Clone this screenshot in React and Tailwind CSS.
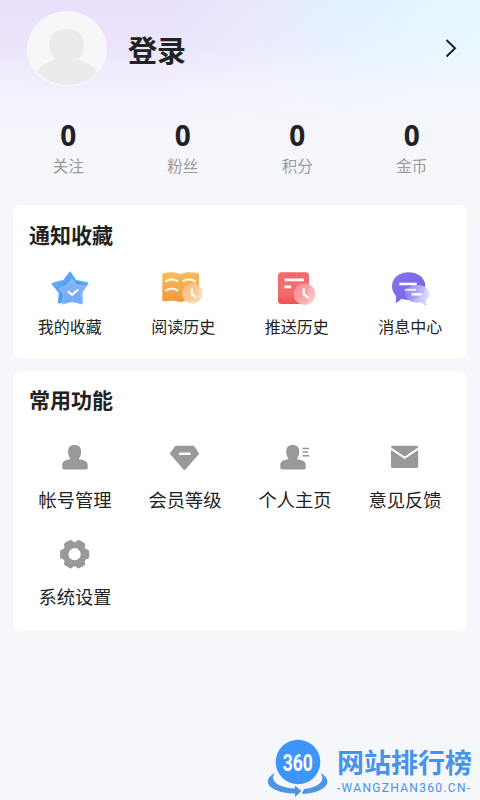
import React from 'react';

const stats = [
  { label: '关注', value: 0 },
  { label: '粉丝', value: 0 },
  { label: '积分', value: 0 },
  { label: '金币', value: 0 }
];

const StarIcon = () => <svg viewBox="0 0 40 40" className="w-10 h-10">
    <defs>
      <linearGradient id="starBack" x1="0" y1="0" x2="1" y2="1">
        <stop offset="0" stopColor="#74b8fb" />
        <stop offset="0.5" stopColor="#4a9bf3" />
        <stop offset="1" stopColor="#8fc3fb" />
      </linearGradient>
      <linearGradient id="starFront" x1="0" y1="0" x2="0" y2="1">
        <stop offset="0" stopColor="#8cbcf8" />
        <stop offset="1" stopColor="#74a4f4" />
      </linearGradient>
    </defs>
    <path d="M20 3.5L25.5 12L37.5 14.3L31.5 23L32 34L20 31.5L9 33.5L9.8 23.5L2.5 14.8L14 11.8Z" fill="url(#starBack)" stroke="url(#starBack)" strokeWidth="2" strokeLinejoin="round" />
    <path d="M22 10L27 16L36 17.8L31.4 25L32 35L22.2 32.8L12.7 35.2L13.7 26L9.2 19.8L17 16.2Z" fill="url(#starFront)" fillOpacity="0.92" stroke="#9cc5fb" strokeWidth="0.8" strokeLinejoin="round" />
    <path d="M18.6 22.8L22 25.8L27.6 21" fill="none" stroke="#fff" strokeWidth="2.2" strokeLinecap="round" strokeLinejoin="round" />
  </svg>;

const BookIcon = () => <svg viewBox="0 0 40 40" className="w-10 h-10 overflow-visible">
    <defs>
      <linearGradient id="book" x1="0" y1="0" x2="0" y2="1">
        <stop offset="0" stopColor="#f5bd5f" />
        <stop offset="1" stopColor="#f0983b" />
      </linearGradient>
      <linearGradient id="bookClock" x1="0" y1="0" x2="1" y2="1">
        <stop offset="0" stopColor="#f6b878" />
        <stop offset="1" stopColor="#fde3cb" />
      </linearGradient>
    </defs>
    <g transform="translate(-1 0)">
      <path d="M2 4C8 3 14 3 18.5 5.2C23 3 30 3 35.5 4Q37 4.2 37 6V31Q37 32.5 35.5 32.2C30 31.4 23 31.5 18.5 33C14 31.5 7 31.4 2 32.2Q.3 32.5 .3 31V6Q.3 4.2 2 4Z" fill="url(#book)" />
      <path d="M4 12.3Q9.5 8.6 15.3 12M21.4 12Q27.5 8.6 33 12.3M4 21.4Q9.5 17.8 15.3 21.2" fill="none" stroke="#fff6df" strokeWidth="2.3" strokeLinecap="round" />
      <circle cx="30.3" cy="24.5" r="10.3" fill="url(#bookClock)" fillOpacity="0.9" />
      <path d="M29.8 20V25L33.5 28.2" fill="none" stroke="#fffaf2" strokeWidth="2" strokeLinecap="round" />
    </g>
  </svg>;

const PushIcon = () => <svg viewBox="0 0 40 40" className="w-10 h-10">
    <defs>
      <linearGradient id="push" x1="0" y1="0" x2="0" y2="1">
        <stop offset="0" stopColor="#f0696b" />
        <stop offset="0.6" stopColor="#f16f70" />
        <stop offset="1" stopColor="#ee5355" />
      </linearGradient>
      <linearGradient id="pushClock" x1="0" y1="0" x2="1" y2="1">
        <stop offset="0" stopColor="#f38687" />
        <stop offset="1" stopColor="#fcd0d0" />
      </linearGradient>
    </defs>
    <rect x="1" y="3.3" width="31" height="31.7" rx="3.5" fill="url(#push)" />
    <path d="M7.5 10.9H26.8M7.5 17.8H14.2" stroke="#fff" strokeWidth="2.8" />
    <circle cx="27.5" cy="25.2" r="10.8" fill="url(#pushClock)" fillOpacity="0.94" />
    <path d="M26.7 20.2V25.2L30.9 28.4" fill="none" stroke="#fff" strokeWidth="2.2" strokeLinecap="round" />
  </svg>;

const MessageIcon = () => <svg viewBox="0 0 40 40" className="w-10 h-10">
    <defs>
      <linearGradient id="msg" x1="0" y1="0" x2="1" y2="1">
        <stop offset="0" stopColor="#8674ec" />
        <stop offset="1" stopColor="#7362e8" />
      </linearGradient>
      <linearGradient id="msgFront" x1="0" y1="0" x2="1" y2="0">
        <stop offset="0" stopColor="#8f84f0" />
        <stop offset="1" stopColor="#dcdcfc" />
      </linearGradient>
    </defs>
    <path d="M18.7 3.3C28 3.3 35.3 9 35.3 17C35.3 25 28 31 18.7 31C16 31 13.5 30.5 11.3 29.8C9.8 31.8 7.8 33.3 5.5 34C6.3 31.7 6.2 29 5.8 26.5C3.4 24 2 20.8 2 17C2 9 9.4 3.3 18.7 3.3Z" fill="url(#msg)" />
    <path d="M27.2 16C34 16 39.3 19.5 39.3 24.8C39.3 27.5 38 29.7 35.8 31.2C35.5 33 36 34.8 37 36.5C34.7 36.2 32.7 35 31.2 33.2C29.9 33.5 28.6 33.6 27.2 33.6C20.5 33.6 15 30 15 24.8C15 19.5 20.5 16 27.2 16Z" fill="url(#msgFront)" fillOpacity="0.88" />
    <path d="M9.3 15H26.7" stroke="#fff" strokeWidth="2.6" />
    <path d="M14.7 20.8H26" stroke="#fff" strokeOpacity="0.8" strokeWidth="2" />
    <path d="M21.7 25.3H31.5" stroke="#fff" strokeWidth="2.4" />
  </svg>;

const UserIcon = () => <svg viewBox="0 0 32 32" className="w-8 h-8" fill="#999">
    <path d="M15.6 4C19.8 4 22.1 6.3 22.1 10C22.1 13.5 21.4 15.6 20.1 17.2V18.2C24 18.7 28.7 19.6 28.7 24V26.8Q28.7 28.5 27 28.5H5Q3.3 28.5 3.3 26.8V24C3.3 19.6 7.5 18.7 11.1 18.2V17.2C9.8 15.6 9.1 13.5 9.1 10C9.1 6.3 11.4 4 15.6 4Z" />
  </svg>;

const LevelIcon = () => <svg viewBox="0 0 32 32" className="w-8 h-8">
    <path d="M7 5.7H24.5L29 12.7L15.5 28L2 12.7Z" fill="#999" stroke="#999" strokeWidth="2" strokeLinejoin="round" />
    <path d="M11 12.8H20.5" stroke="#fff" strokeWidth="2.5" strokeLinecap="round" />
  </svg>;

const HomeIcon = () => <svg viewBox="0 0 32 32" className="w-8 h-8" fill="#999">
    <path d="M13.7 4C17.9 4 20.2 6.3 20.2 10C20.2 13.5 19.5 15.6 18.2 17.2V18.2C22 18.7 26.7 19.6 26.7 24V26.8Q26.7 28.5 25 28.5H3Q1.3 28.5 1.3 26.8V24C1.3 19.6 5.6 18.7 9.2 18.2V17.2C7.9 15.6 7.2 13.5 7.2 10C7.2 6.3 9.5 4 13.7 4Z" />
    <path d="M23.5 7.4H30M23.5 11H29M23.5 14.7H30" stroke="#999" strokeWidth="1.5" />
  </svg>;

const MailIcon = () => <svg viewBox="0 0 32 32" className="w-8 h-8">
    <rect x="2" y="4.7" width="27.2" height="22.4" rx="1.8" fill="#999" />
    <path d="M1.5 7.3L15.6 16.8L29.7 7.3" fill="none" stroke="#fff" strokeWidth="2" />
  </svg>;

const GearIcon = () => <svg viewBox="0 0 32 32" className="w-8 h-8">
    <g fill="#999">
      <circle cx="15.6" cy="16.2" r="12.3" />
      <rect x="1" y="11.2" width="29.2" height="10" rx="3" />
      <rect x="1" y="11.2" width="29.2" height="10" rx="3" transform="rotate(60 15.6 16.2)" />
      <rect x="1" y="11.2" width="29.2" height="10" rx="3" transform="rotate(120 15.6 16.2)" />
    </g>
    <circle cx="15.6" cy="16.2" r="6.1" fill="#fff" />
  </svg>;

const collections = [
  { label: '我的收藏', icon: StarIcon },
  { label: '阅读历史', icon: BookIcon },
  { label: '推送历史', icon: PushIcon },
  { label: '消息中心', icon: MessageIcon }
];

const features = [
  { label: '帐号管理', icon: UserIcon },
  { label: '会员等级', icon: LevelIcon },
  { label: '个人主页', icon: HomeIcon },
  { label: '意见反馈', icon: MailIcon },
  { label: '系统设置', icon: GearIcon }
];

const SiteLogo = () => <svg viewBox="0 0 60 62" className="w-[60px] h-[62px] shrink-0">
    <circle cx="30" cy="24" r="22.3" fill="#3d95f8" />
    <text x="29.8" y="32.5" textAnchor="middle" textLength="30" lengthAdjust="spacingAndGlyphs" fontSize="24" fontWeight="700" fill="#fff" fontFamily="Roboto, sans-serif">360</text>
    <path d="M7 35C1 42 9 49.500 27 50.500V47.500L33.500 53L27 59V55.600C-1 54.500 -7 42 7 35Z" fill="#4c95e6" />
    <path d="M52.500 35C66 42 60 54.500 34 56L36 51C51 49.500 58 42.500 52.500 35Z" fill="#4c95e6" />
  </svg>;

export default function App() {
  return <div className="w-full h-[800px] flex flex-col overflow-hidden bg-[#f6f7fa] text-[#222] font-['Noto_Sans_CJK_SC',sans-serif]">
    {/* 用户信息 */}
    <div className="h-[205px] shrink-0 bg-[linear-gradient(to_bottom,transparent_0%,rgba(246,247,250,0.2)_22%,rgba(246,246,253,0.85)_48%,#f6f7fa_80%),linear-gradient(to_right,#eadffb_0%,#e9e0fc_35%,#e9e8fd_52%,#e3f1ff_72%,#e6f7ff_100%)]">
      <div className="h-[98px] flex items-center pl-[27px] pr-[22px]">
        <svg viewBox="0 0 80 80" className="w-20 h-[76px] shrink-0" preserveAspectRatio="none">
          <defs>
            <clipPath id="avatar">
              <circle cx="40" cy="40" r="40" />
            </clipPath>
          </defs>
          <g clipPath="url(#avatar)">
            <rect width="80" height="80" fill="#f7f7fa" />
            <path d="M40 19C51 19 57.500 26 57 36C56.500 43 54 48 51 51C60 55 68 57 70 65C61 74 50 78 40 78C29 78 19 73 10 64C12 57 20 54 28 51C25 48 22.500 43 22.200 36C21.500 26 29 19 40 19Z" fill="#ebebed" />
          </g>
        </svg>
        <h1 className="ml-[21px] text-[29px] leading-none font-bold">登录</h1>
        <svg viewBox="0 0 14 20" className="ml-auto w-3.5 h-5 -mt-0.5">
          <path d="M2.5 2L11 10.3L2.5 18.5" fill="none" stroke="#222" strokeWidth="2" />
        </svg>
      </div>
      <div className="grid grid-cols-4 mx-[11px] mt-[22px]">
        {stats.map(item => <div key={item.label} className="flex flex-col items-center">
            <span className="text-[28px] leading-[30px] font-bold font-['Noto_Sans',sans-serif]">{item.value}</span>
            <span className="mt-[3px] text-[15.5px] leading-6 text-[#999]">{item.label}</span>
          </div>)}
      </div>
    </div>

    {/* 通知收藏 */}
    <section className="mx-[13px] h-[153px] shrink-0 rounded-lg bg-white pt-[13px]">
      <h2 className="pl-4 text-[21px] leading-8 font-bold">通知收藏</h2>
      <div className="grid grid-cols-4 mt-[19px]">
        {collections.map(item => <div key={item.label} className="flex flex-col items-center">
            <item.icon />
            <span className="mt-[5px] text-base leading-6">{item.label}</span>
          </div>)}
      </div>
    </section>

    {/* 常用功能 */}
    <section className="mx-[13px] mt-[13px] h-[260px] shrink-0 rounded-lg bg-white pt-3">
      <h2 className="pl-4 text-[21px] leading-8 font-bold">常用功能</h2>
      <div className="grid grid-cols-4 gap-y-[29px] mx-[7px] mt-[26px]">
        {features.map(item => <div key={item.label} className="flex flex-col items-center">
            <item.icon />
            <span className="mt-4 text-[18.3px] leading-5">{item.label}</span>
          </div>)}
      </div>
    </section>

    {/* 站点标识 */}
    <div className="mt-auto flex items-start pl-[268px] h-[62px]">
      <SiteLogo />
      <div className="ml-[9px] pt-2.5">
        <div className="text-[27px] leading-7 font-bold text-[#4593ea] whitespace-nowrap">网站排行榜</div>
        <div className="mt-1 text-xs leading-4 tracking-[1.3px] text-[#4593ea] whitespace-nowrap font-[Roboto,sans-serif]">-WANGZHAN360.CN-</div>
      </div>
    </div>
  </div>;
}
